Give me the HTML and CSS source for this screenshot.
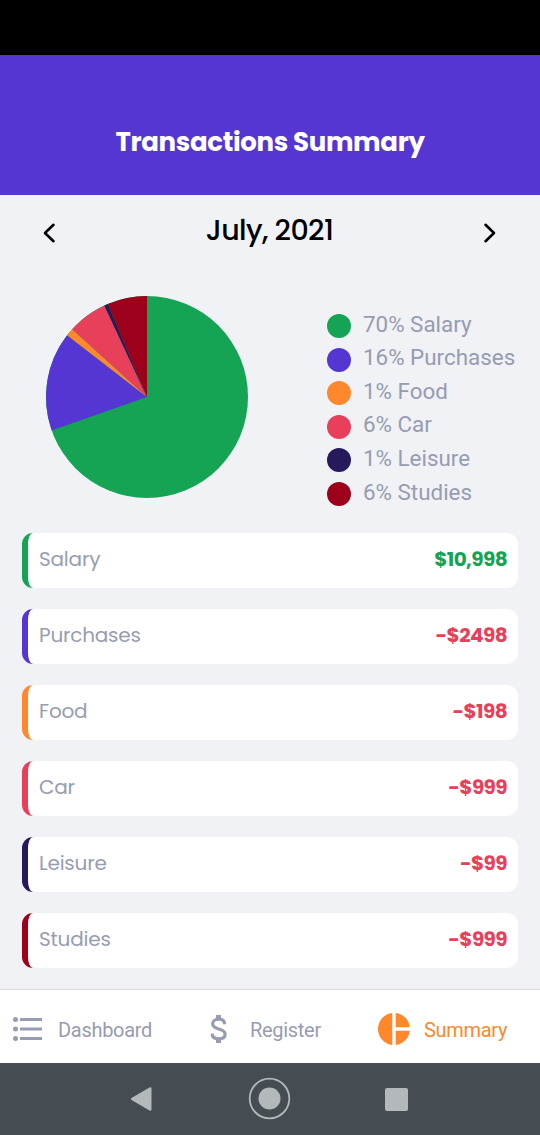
FILE: index.html
```html
<!DOCTYPE html>
<html lang="en">
<head>
<meta charset="utf-8">
<title>Transactions Summary</title>
<link rel="stylesheet" href="styles.css">
</head>
<body>
<div class="status-bar"></div>
<header class="header"><h1 class="title">Transactions Summary</h1></header>
<main class="content">
  <div class="month">
    <svg class="chevron" viewBox="0 0 12 20"><path d="M10.5 1.8 2 10l8.5 8.2"/></svg>
    <span class="month-name">July, 2021</span>
    <svg class="chevron" viewBox="0 0 12 20"><path d="M1.5 1.8 10 10l-8.5 8.2"/></svg>
  </div>
  <section class="overview">
    <svg class="pie" viewBox="-101 -101 202 202">
      <circle r="101" fill="#14a454"/>
      <path fill="#5636d3" d="M0 0-95.3 33.4A101 101 0 0 1-79.9-61.8Z"/>
      <path fill="#ff872c" d="M0 0-79.9-61.8A101 101 0 0 1-74.8-67.8Z"/>
      <path fill="#e83f5b" d="M0 0-74.8-67.8A101 101 0 0 1-42.7-91.5Z"/>
      <path fill="#26195c" d="M0 0-42.7-91.5A101 101 0 0 1-39.1-93.1Z"/>
      <path fill="#9c001a" d="M0 0-39.1-93.1A101 101 0 0 1 0-101Z"/>
    </svg>
    <ul class="legend">
      <li><i class="dot green"></i><span>70% Salary</span></li>
      <li><i class="dot purple"></i><span>16% Purchases</span></li>
      <li><i class="dot orange"></i><span>1% Food</span></li>
      <li><i class="dot red"></i><span>6% Car</span></li>
      <li><i class="dot navy"></i><span>1% Leisure</span></li>
      <li><i class="dot wine"></i><span>6% Studies</span></li>
    </ul>
  </section>
  <section class="cards">
    <article class="card green"><span>Salary</span><b class="income">$10,998</b></article>
    <article class="card purple"><span>Purchases</span><b>-$2498</b></article>
    <article class="card orange"><span>Food</span><b>-$198</b></article>
    <article class="card red"><span>Car</span><b>-$999</b></article>
    <article class="card navy"><span>Leisure</span><b>-$99</b></article>
    <article class="card wine"><span>Studies</span><b>-$999</b></article>
  </section>
</main>
<nav class="tabs">
  <a class="tab dashboard">
    <svg width="30" height="24" viewBox="0 0 30 24" fill="currentColor"><circle cx="2.5" cy="2.5" r="2.5"/><circle cx="2.5" cy="12" r="2.5"/><circle cx="2.5" cy="21.5" r="2.5"/><path d="M7 1h22v3H7zM7 10.5h22v3H7zM7 20h22v3H7z"/></svg>
    <span>Dashboard</span>
  </a>
  <a class="tab register">
    <svg width="17" height="28" viewBox="0 0 17 28" fill="none" stroke="currentColor"><path stroke-width="5" d="M8.5 0v4M8.5 24v4"/><path stroke-width="3.2" d="M14.6 9.2C14.6 6 12.2 4.2 8.7 4.2 5 4.2 2.6 6 2.6 8.8c0 3.5 3.2 4.4 6.2 5.2 3.5.9 6.3 2 6.3 5.2 0 3-2.5 4.6-6.3 4.6-4 0-6.6-1.9-6.7-5.2"/></svg>
    <span>Register</span>
  </a>
  <a class="tab summary">
    <svg width="32" height="32" viewBox="0 0 32 32" fill="currentColor"><path d="M14.3 0v32A16.1 16.1 0 0 1 14.3 0ZM17.7 0A16 16 0 0 1 31.8 14.2H17.7ZM17.7 17.7h14.1A16 16 0 0 1 17.7 32Z"/></svg>
    <span>Summary</span>
  </a>
</nav>
<footer class="system-nav">
  <svg width="22" height="26" viewBox="0 0 22 26"><path d="M1.5 12 19.5 1.5Q21.5.5 21.5 2.5v21q0 2-2 1L1.5 14q-1.5-1 0-2Z" fill="#b3b9bb"/></svg>
  <svg width="42" height="42" viewBox="0 0 42 42"><circle cx="21.5" cy="20.5" r="19.8" fill="none" stroke="#b3b9bb" stroke-width="1.8"/><circle cx="21.5" cy="20.5" r="11" fill="#b3b9bb"/></svg>
  <svg width="23" height="23" viewBox="0 0 23 23"><rect width="23" height="23" rx="2" fill="#b3b9bb"/></svg>
</footer>
</body>
</html>
```

FILE: styles.css
```css
* { box-sizing: border-box; }
body {
  margin: 0;
  width: 540px;
  height: 1135px;
  display: flex;
  flex-direction: column;
  overflow: hidden;
  background: #f0f2f5;
  color: #969cb2;
  font-family: Poppins, Inter, sans-serif;
}
svg { display: block; flex: none; overflow: visible; }
.status-bar { height: 55px; background: #000; }
.header {
  height: 140px;
  padding-top: 69px;
  background: #5636d3;
  text-align: center;
}
.title {
  margin: 0;
  color: #fff;
  font-size: 26px;
  line-height: 36px;
  font-weight: 700;
  letter-spacing: -0.33px;
}
.content { height: 794px; }
.month {
  height: 75px;
  padding: 0 43.5px 0 42.5px;
  display: flex;
  justify-content: space-between;
}
.chevron {
  width: 12px;
  height: 20px;
  margin-top: 28px;
  fill: none;
  stroke: #000;
  stroke-width: 2.6;
  stroke-linecap: round;
  stroke-linejoin: round;
}
.month-name {
  margin-top: 15px;
  color: #000;
  font-size: 28.5px;
  line-height: 40px;
  font-weight: 500;
  letter-spacing: -0.6px;
}
.overview {
  height: 263px;
  padding: 25px 0 0 46px;
  display: flex;
  align-items: flex-start;
  gap: 79px;
}
.pie { width: 202px; height: 202px; margin-top: 0.5px; }
.legend {
  margin: 13.2px 0 0;
  padding: 0;
  list-style: none;
  font: 22.4px/33.6px Roboto, sans-serif;
}
.legend li {
  height: 33.6px;
  display: flex;
  align-items: center;
  gap: 12px;
  white-space: nowrap;
}
.legend span { margin-top: -1px; }
.dot { width: 24px; height: 24px; margin-top: 2px; border-radius: 50%; background: var(--accent); }
.green { --accent: #14a454; }
.purple { --accent: #5636d3; }
.orange { --accent: #ff872c; }
.red { --accent: #e83f5b; }
.navy { --accent: #26195c; }
.wine { --accent: #9c001a; }
.cards {
  padding: 0 22px;
  display: grid;
  gap: 21px;
}
.card {
  height: 55px;
  padding: 0 11px 3px;
  display: flex;
  align-items: center;
  justify-content: space-between;
  background: #fff;
  border-left: 6px solid var(--accent);
  border-radius: 11px;
  font-size: 20px;
  letter-spacing: -0.2px;
}
.card b { color: #e83f5b; font-weight: 700; letter-spacing: -0.6px; }
.card .income { color: #14a454; }
.tabs {
  height: 74px;
  display: flex;
  align-items: center;
  background: #fff;
  border-top: 1px solid #d8d8d9;
  padding: 4px 0 0 13px;
  font: 20px Roboto, sans-serif;
  letter-spacing: -0.3px;
}
.tab span { margin-top: 2px; }
.tab { display: flex; align-items: center; }
.dashboard { width: 197px; gap: 15px; }
.register { width: 168px; gap: 23px; }
.summary { gap: 14px; color: #ff872c; }
.system-nav {
  height: 72px;
  padding: 0 132px 0 130px;
  display: flex;
  align-items: center;
  justify-content: space-between;
  background: #454d52;
}
```
